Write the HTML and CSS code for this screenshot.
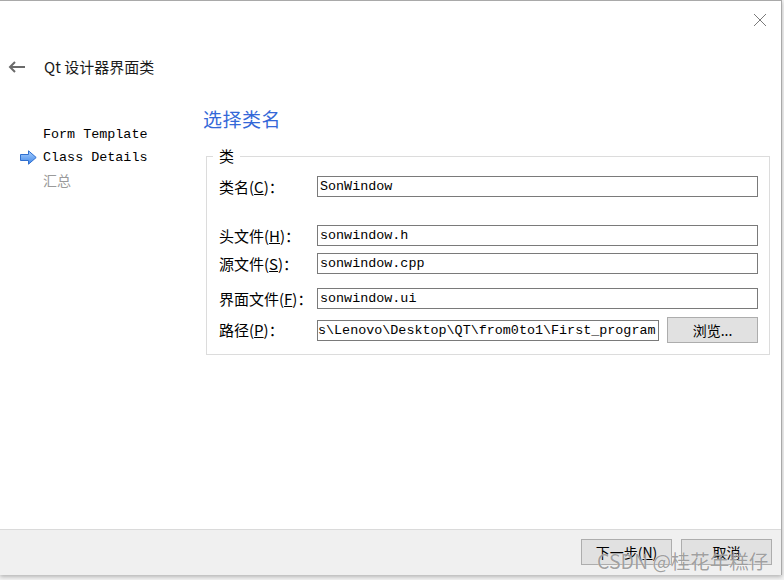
FILE: index.html
```html
<!DOCTYPE html>
<html lang="zh-CN">
<head>
<meta charset="utf-8">
<title>Qt 设计器界面类</title>
<link rel="stylesheet" href="styles.css">
</head>
<body>
<div class="window">
  <div class="titlebar">
    <svg class="close" width="14" height="14" viewBox="0 0 14 14"><path d="M1 1 L13 13 M13 1 L1 13" stroke="#7a7a7a" stroke-width="1" fill="none"/></svg>
  </div>
  <div class="header">
    <svg class="back" width="18" height="12" viewBox="0 0 18 12"><path d="M17 6 H2 M7 1 L2 6 L7 11" stroke="#6a6a6a" stroke-width="2" fill="none"/></svg>
    <span class="title">Qt 设计器界面类</span>
  </div>
  <div class="main">
    <ul class="nav">
      <li class="nav-item">Form Template</li>
      <li class="nav-item current">
        <svg class="cur-arrow" width="17" height="15" viewBox="0 0 17 15"><defs><linearGradient id="g" x1="0" y1="0" x2="0" y2="1"><stop offset="0" stop-color="#a9d0ff"/><stop offset="1" stop-color="#3f86e8"/></linearGradient></defs><path d="M0.5 4.5 H8.5 V0.8 L16.2 7.5 L8.5 14.2 V10.5 H0.5 Z" fill="url(#g)" stroke="#2f6fcf" stroke-width="1"/></svg>
        Class Details
      </li>
      <li class="nav-item disabled">汇总</li>
    </ul>
    <div class="content">
      <h1 class="heading">选择类名</h1>
      <fieldset class="group">
        <legend class="legend">类</legend>
        <div class="row r1"><label class="lbl">类名(<u>C</u>)：</label><div class="field">SonWindow</div></div>
        <div class="row r2"><label class="lbl">头文件(<u>H</u>)：</label><div class="field">sonwindow.h</div></div>
        <div class="row r3"><label class="lbl">源文件(<u>S</u>)：</label><div class="field">sonwindow.cpp</div></div>
        <div class="row r4"><label class="lbl">界面文件(<u>F</u>)：</label><div class="field">sonwindow.ui</div></div>
        <div class="row r5"><label class="lbl">路径(<u>P</u>)：</label><div class="field path">s\Lenovo\Desktop\QT\from0to1\First_program</div><button class="btn browse">浏览...</button></div>
      </fieldset>
    </div>
  </div>
  <div class="footer">
    <button class="btn fbtn">下一步(<u>N</u>)</button>
    <button class="btn fbtn">取消</button>
  </div>
  <div class="watermark">CSDN @桂花年糕仔</div>
</div>
</body>
</html>
```
FILE: styles.css
```css
html, body {
  margin: 0;
  padding: 0;
}
body {
  width: 784px;
  height: 580px;
  background: #f3f3f3;
  overflow: hidden;
  font-family: "Noto Sans CJK SC", "Noto Sans", sans-serif;
  color: #000;
}
.window {
  position: relative;
  width: 782px;
  height: 575px;
  box-sizing: border-box;
  border-top: 1px solid #a9a9a9;
  border-right: 1px solid #a9a9a9;
  background: #fff;
  display: flex;
  flex-direction: column;
  box-shadow: 0 2px 4px rgba(0,0,0,0.25);
}
.titlebar {
  height: 37px;
  display: flex;
  justify-content: flex-end;
  align-items: center;
  padding-right: 14px;
}
.close {
  display: block;
}
.header {
  height: 58px;
  display: flex;
  align-items: center;
}
.back {
  margin-left: 8px;
  width: 18px;
}
.title {
  margin-left: 18px;
  font-size: 15px;
  line-height: 20px;
  color: #1a1a1a;
}
.main {
  flex: 1;
  display: flex;
}
.nav {
  list-style: none;
  margin: 0;
  padding: 27px 0 0 0;
  width: 203px;
  flex: none;
}
.nav-item {
  position: relative;
  height: 23px;
  line-height: 23px;
  padding-left: 43px;
  font-family: "Liberation Mono", monospace;
  font-size: 13.4px;
  color: #000;
}
.nav-item.disabled {
  font-family: "Noto Sans CJK SC", sans-serif;
  font-size: 14px;
  color: #9a9a9a;
}
.cur-arrow {
  position: absolute;
  left: 20px;
  top: 4px;
}
.content {
  flex: 1;
  padding: 11px 11px 0 0;
}
.heading {
  margin: 0;
  font-size: 19px;
  line-height: 24px;
  font-weight: normal;
  color: #3468d8;
  letter-spacing: 0.5px;
}
.group {
  margin: 17px 0 0 3px;
  padding: 0 11px 11px 12px;
  border: 1px solid #dcdcdc;
}
.legend {
  margin-left: -6px;
  padding: 0 6px;
  font-size: 15px;
  line-height: 16px;
}
.row {
  display: flex;
  align-items: center;
  height: 21px;
}
.r1 { margin-top: 12px; }
.r2 { margin-top: 28px; }
.r3 { margin-top: 7px; }
.r4 { margin-top: 14px; }
.r5 { margin-top: 8px; height: 26px; }
.lbl {
  width: 98px;
  flex: none;
  font-size: 15px;
  line-height: 20px;
  white-space: nowrap;
}
.field {
  flex: 1;
  height: 21px;
  box-sizing: border-box;
  border: 1px solid #7a7a7a;
  padding: 0 2px;
  font-family: "Liberation Mono", monospace;
  font-size: 13.4px;
  line-height: 19px;
  white-space: nowrap;
  overflow: hidden;
}
.field.path {
  padding-left: 0;
}
.btn {
  box-sizing: border-box;
  border: 1px solid #adadad;
  background: #e1e1e1;
  font-family: "Noto Sans CJK SC", sans-serif;
  font-size: 14px;
  color: #000;
  padding: 0;
}
.browse {
  width: 91px;
  height: 26px;
  margin-left: 8px;
  flex: none;
}
.footer {
  height: 46px;
  box-sizing: border-box;
  border-top: 1px solid #dadada;
  background: #f0f0f0;
  display: flex;
  justify-content: flex-end;
  gap: 9px;
  padding: 9px 9px 0 0;
}
.fbtn {
  width: 91px;
  height: 26px;
}
.watermark {
  position: absolute;
  left: 597px;
  top: 547px;
  font-size: 19.5px;
  line-height: 26px;
  color: rgba(120,120,120,0.7);
  text-shadow: 0 0 1px rgba(255,255,255,0.9);
  white-space: nowrap;
}
```
